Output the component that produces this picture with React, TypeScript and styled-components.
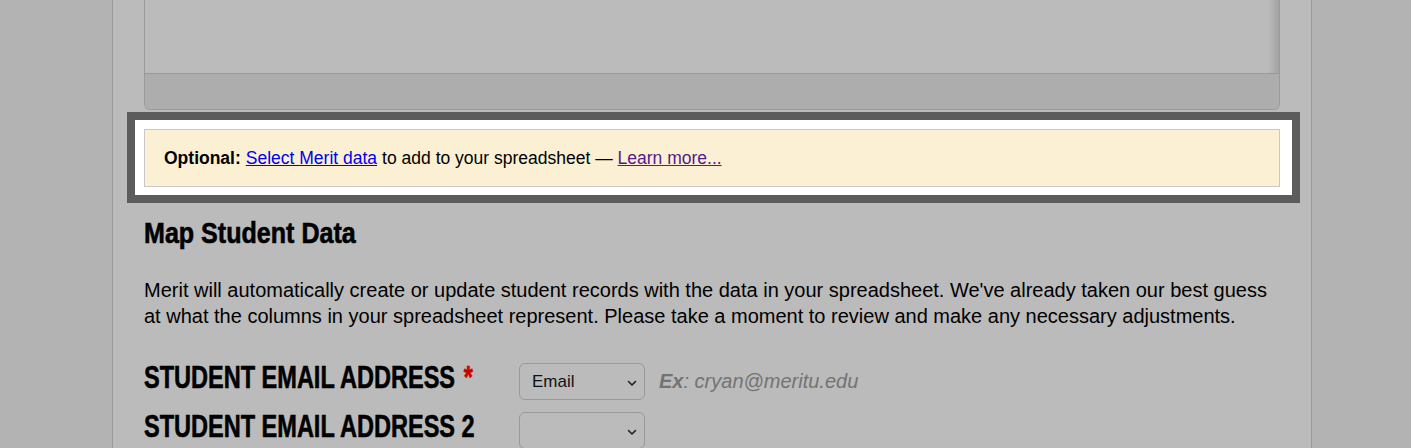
import React from "react";
import styled, { createGlobalStyle } from "styled-components";

const GlobalStyle = createGlobalStyle`
  html, body {
    margin: 0;
    padding: 0;
    background: #b3b3b3;
  }
  body {
    font-family: "Liberation Sans", Arial, sans-serif;
    color: #000;
  }
`;

const Column = styled.div`
  box-sizing: border-box;
  width: 1200px;
  min-height: 448px;
  margin-left: 112px;
  padding: 0 31px;
  background: #bbbbbb;
  border-left: 1px solid #999;
  border-right: 1px solid #999;
`;

const Panel = styled.div`
  border: 1px solid #9a9a9a;
  border-top: none;
  border-radius: 0 0 6px 6px;
  overflow: hidden;
`;

const ScrollArea = styled.div`
  height: 73px;
  background: #bbbbbb;
  border-bottom: 1px solid #999;
  box-shadow: inset -14px 0 6px -8px rgba(0, 0, 0, 0.12);
`;

const PanelFooter = styled.div`
  height: 35px;
  background: #adadad;
`;

const Spotlight = styled.div`
  margin: 2px -20px 0 -17px;
  border: 8px solid #5c5c5c;
  background: #fff;
  padding: 9px 12px 8px 9px;
`;

const Notice = styled.div`
  display: flex;
  align-items: center;
  height: 56px;
  padding: 0 19px;
  background: #fbf0d3;
  border: 1px solid #c9c9c9;
  font-size: 17.5px;

  b {
    margin-right: 5px;
  }
`;

const Link = styled.a<{ $visited?: boolean }>`
  color: ${(p) => (p.$visited ? "#551a8b" : "#0000ee")};
  text-decoration: underline;
  margin-right: 5px;
  cursor: pointer;
`;

/* no condensed face is installed, so the bold sans is narrowed */
const Heading = styled.h2`
  margin: 13px 0 0;
  font-size: 29.5px;
  font-weight: bold;
  line-height: 34px;
  -webkit-text-stroke: 0.6px #000;
  transform: scaleX(0.85);
  transform-origin: left center;
`;

const Intro = styled.p`
  margin: 28px 0 0;
  font-size: 20px;
  line-height: 25.5px;
`;

const Fields = styled.div`
  display: grid;
  grid-template-columns: 375px auto 1fr;
  align-items: center;
  row-gap: 12px;
  margin-top: 34px;
`;

const Label = styled.div`
  align-self: start;
  font-size: 32px;
  font-weight: bold;
  line-height: 29px;
  white-space: nowrap;
  -webkit-text-stroke: 0.6px #000;
  transform: scaleX(0.735);
  transform-origin: left center;
`;

const Required = styled.span`
  margin-left: 3px;
  color: #cc0000;
  -webkit-text-stroke: 0.6px #cc0000;
`;

const SelectWrap = styled.div`
  position: relative;
  width: 126px;
  height: 37px;
`;

const Select = styled.select`
  appearance: none;
  box-sizing: border-box;
  width: 100%;
  height: 100%;
  padding: 0 26px 0 12px;
  background: transparent;
  border: 1px solid #999;
  border-radius: 6px;
  font-family: "Liberation Sans", Arial, sans-serif;
  font-size: 17px;
  color: #111;
`;

const Chevron = styled.svg`
  position: absolute;
  right: 8px;
  top: 50%;
  width: 10px;
  height: 10px;
  margin-top: -4px;
  pointer-events: none;
`;

const Hint = styled.div`
  margin-left: 14px;
  font-size: 20px;
  font-style: italic;
  color: #737373;

  b {
    font-weight: bold;
  }
`;

const ChevronIcon = () => (
  <Chevron viewBox="0 0 10 10">
    <path d="M1.5 3.5 L5 7 L8.5 3.5" fill="none" stroke="#222" strokeWidth="1.6" strokeLinecap="round" strokeLinejoin="round" />
  </Chevron>
);

const MapField = ({
  label,
  required,
  value,
  hint,
}: {
  label: string;
  required?: boolean;
  value: string;
  hint?: string;
}) => (
  <>
    <Label>
      {label}
      {required && (
        <>
          {" "}
          <Required>*</Required>
        </>
      )}
    </Label>
    <SelectWrap>
      <Select defaultValue={value}>
        <option value=""></option>
        <option value="Email">Email</option>
      </Select>
      <ChevronIcon />
    </SelectWrap>
    {hint ? (
      <Hint>
        <b>Ex</b>: {hint}
      </Hint>
    ) : (
      <div />
    )}
  </>
);

const App = () => {
  return (
    <>
      <GlobalStyle />
      <Column>
        <Panel>
          <ScrollArea />
          <PanelFooter />
        </Panel>
        <Spotlight>
          <Notice>
            <b>Optional:</b>
            <Link>Select Merit data</Link>
            to add to your spreadsheet —&nbsp;
            <Link $visited>Learn more...</Link>
          </Notice>
        </Spotlight>
        <Heading>Map Student Data</Heading>
        <Intro>
          Merit will automatically create or update student records with the data in your spreadsheet. We've already
          taken our best guess at what the columns in your spreadsheet represent. Please take a moment to review and
          make any necessary adjustments.
        </Intro>
        <Fields>
          <MapField label="STUDENT EMAIL ADDRESS" required value="Email" hint="cryan@meritu.edu" />
          <MapField label="STUDENT EMAIL ADDRESS 2" value="" />
        </Fields>
      </Column>
    </>
  );
};

export default App;
